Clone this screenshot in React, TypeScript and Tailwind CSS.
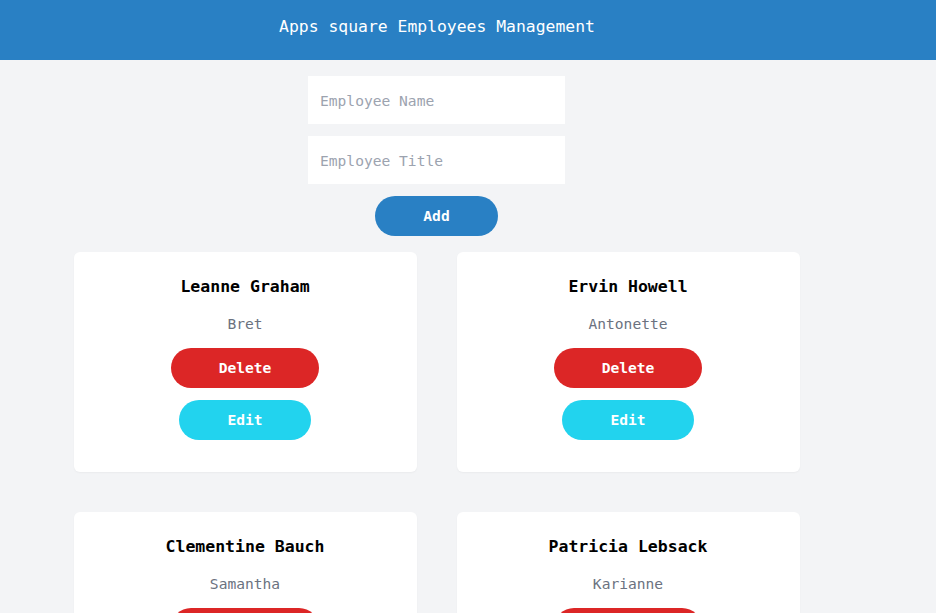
import { useState } from 'react';

type Employee = { id: number; name: string; title: string };

const initial: Employee[] = [
  { id: 1, name: 'Leanne Graham', title: 'Bret' },
  { id: 2, name: 'Ervin Howell', title: 'Antonette' },
  { id: 3, name: 'Clementine Bauch', title: 'Samantha' },
  { id: 4, name: 'Patricia Lebsack', title: 'Karianne' },
];

function EmployeeCard({ emp, onDelete }: { emp: Employee; onDelete: (id: number) => void }) {
  return (
    <div className="flex h-[220px] flex-col items-center rounded-md bg-white pt-[23px] shadow-[0_1px_2px_rgba(0,0,0,0.04)]">
      <h3 className="h-6 text-[16.5px] leading-6 font-bold text-black">{emp.name}</h3>
      <p className="mt-[13px] h-6 text-[14.6px] leading-6 text-[#6b7280]">{emp.title}</p>
      <button
        className="mt-3 h-10 rounded-full bg-[#dc2626] px-12 text-[14.6px] font-bold text-white"
        onClick={() => onDelete(emp.id)}
      >
        Delete
      </button>
      <button className="mt-3 h-10 rounded-full bg-[#22d3ee] px-12 text-[14.6px] font-bold text-white">Edit</button>
    </div>
  );
}

export default function App() {
  const [employees, setEmployees] = useState<Employee[]>(initial);
  const [name, setName] = useState('');
  const [title, setTitle] = useState('');

  const add = () => {
    if (!name) return;
    setEmployees([...employees, { id: Date.now(), name, title }]);
    setName('');
    setTitle('');
  };

  return (
    <div className="min-h-[613px] bg-[#f3f4f6] font-['DejaVu_Sans_Mono',monospace]">
      <header className="h-[60px] bg-[#2980c4]">
        <div className="w-[874px] pt-[15px] text-center text-[16.4px] leading-6 text-white">
          Apps square Employees Management
        </div>
      </header>
      <div className="flex w-[873px] flex-col items-center pt-4">
        <input
          className="h-12 w-[257px] bg-white px-3 text-[14.6px] outline-none placeholder:text-[#9ca3af]"
          placeholder="Employee Name"
          value={name}
          onChange={e => setName(e.target.value)}
        />
        <input
          className="mt-3 h-12 w-[257px] bg-white px-3 text-[14.6px] outline-none placeholder:text-[#9ca3af]"
          placeholder="Employee Title"
          value={title}
          onChange={e => setTitle(e.target.value)}
        />
        <button
          className="mt-3 h-10 rounded-full bg-[#2980c4] px-12 text-[14.6px] font-bold text-white"
          onClick={add}
        >
          Add
        </button>
        <div className="mt-4 grid grid-cols-[343px_343px] gap-10">
          {employees.map(emp => (
            <EmployeeCard key={emp.id} emp={emp} onDelete={id => setEmployees(employees.filter(e => e.id !== id))} />
          ))}
        </div>
      </div>
    </div>
  );
}
